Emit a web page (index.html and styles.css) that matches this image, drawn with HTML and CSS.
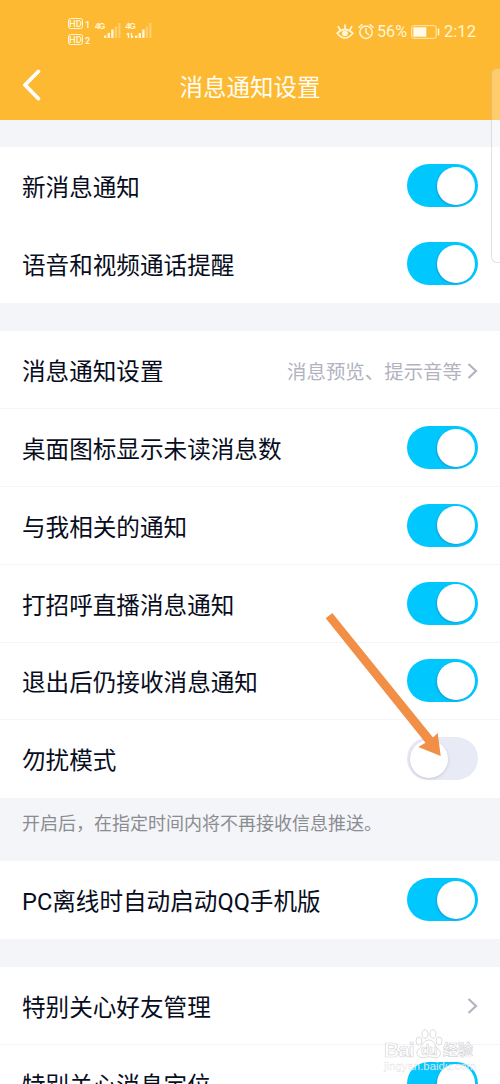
FILE: index.html
```html
<!DOCTYPE html>
<html lang="zh-CN">
<head>
<meta charset="utf-8">
<title>消息通知设置</title>
<link rel="stylesheet" href="styles.css">
</head>
<body>
<div class="screen">
  <header class="header">
    <div class="status">
      <div class="status-left">
        <div class="hd-stack">
          <div class="hd"><span class="hd-box">HD</span><span class="hd-num">1</span></div>
          <div class="hd"><span class="hd-box">HD</span><span class="hd-num">2</span></div>
        </div>
        <div class="signal">
          <span class="net">4G</span>
          <svg class="bars" width="26" height="17" viewBox="0 0 26 17"><path d="M9 13.500h2.400v2.500H9zM12.600 11h2.400v5h-2.400zM16.200 7.500h2.400v8.500h-2.400z" fill="#fff6d6"/><path d="M19.800 4.500h2.200v11.500h-2.200zM23.200 1h2.200v15h-2.200z" fill="#fff" opacity=".3"/></svg>
        </div>
        <div class="signal">
          <span class="net">4G</span>
          <svg class="bars" width="26" height="17" viewBox="0 0 26 17"><path d="M2.500 11v5M.8 12.700l1.700-1.700M5.500 11v5M5.500 16l1.700-1.700" stroke="#fff6d6" stroke-width="1.400" fill="none"/><path d="M9 13.500h2.400v2.500H9zM12.600 11h2.400v5h-2.400zM16.200 7.500h2.400v8.500h-2.400z" fill="#fff6d6"/><path d="M19.800 4.500h2.200v11.500h-2.200zM23.200 1h2.200v15h-2.200z" fill="#fff" opacity=".3"/></svg>
        </div>
      </div>
      <div class="status-right">
        <svg width="18" height="16" viewBox="0 0 18 16" fill="none" stroke="#fff6d6" stroke-width="1.700" stroke-linecap="round"><path d="M1.200 9.200Q9 1.500 16.800 9.200Q9 18.800 1.200 9.200Z"/><circle cx="9" cy="9.300" r="2.900" fill="#fff6d6" stroke="none"/><path d="M9 4.500V1M4 5.500 2.200 2.600M14 5.500l1.800-2.900"/></svg>
        <svg class="alarm" width="16" height="17" viewBox="0 0 16 17" fill="none" stroke="#fff6d6" stroke-width="1.500" stroke-linecap="round"><circle cx="8" cy="9.200" r="6.200"/><path d="M8 5.500v4l2.500 2M1 4.200 4 1.500M12 1.500l3 2.700"/></svg>
        <span class="percent">56%</span>
        <svg class="battery" width="29" height="14" viewBox="0 0 29 14"><rect x=".7" y=".7" width="24.500" height="12.600" rx="2" fill="none" stroke="#fff6d6" stroke-width="1" opacity=".8"/><rect x="2.300" y="2.300" width="13" height="9.400" fill="#fffbe8"/><rect x="26.700" y="3.500" width="1.600" height="7" fill="#fff6d6"/></svg>
        <span class="clock">2:12</span>
      </div>
    </div>
    <div class="navbar">
      <svg class="back" width="20" height="34" viewBox="0 0 20 34" fill="none" stroke="#fff" stroke-width="3.900" stroke-linecap="round" stroke-linejoin="round"><path d="M17.300 3.500 4 17 17.300 30.500"/></svg>
      <h1 class="title">消息通知设置</h1>
    </div>
  </header>

  <section class="group plain">
    <div class="row"><span class="label">新消息通知</span><span class="toggle"></span></div>
    <div class="row"><span class="label">语音和视频通话提醒</span><span class="toggle"></span></div>
  </section>

  <section class="group">
    <div class="row"><span class="label">消息通知设置</span><span class="value">消息预览、提示音等</span><svg class="chevron" width="11" height="18" viewBox="0 0 11 18"><path d="M1.500 2 9 9l-7.500 7"/></svg></div>
    <div class="row"><span class="label">桌面图标显示未读消息数</span><span class="toggle"></span></div>
    <div class="row"><span class="label">与我相关的通知</span><span class="toggle"></span></div>
    <div class="row"><span class="label">打招呼直播消息通知</span><span class="toggle"></span></div>
    <div class="row"><span class="label">退出后仍接收消息通知</span><span class="toggle"></span></div>
    <div class="row"><span class="label">勿扰模式</span><span class="toggle off"></span></div>
  </section>
  <p class="hint">开启后，在指定时间内将不再接收信息推送。</p>

  <section class="group">
    <div class="row"><span class="label">PC离线时自动启动QQ手机版</span><span class="toggle"></span></div>
  </section>

  <section class="group">
    <div class="row"><span class="label">特别关心好友管理</span><svg class="chevron" width="11" height="18" viewBox="0 0 11 18"><path d="M1.500 2 9 9l-7.500 7"/></svg></div>
    <div class="row"><span class="label">特别关心消息定位</span><span class="toggle"></span></div>
  </section>

  <div class="edge-panel"></div>
  <svg class="arrow" width="122" height="150" viewBox="0 0 122 150"><polygon points="4.700,8.300 11.300,3 112,127.500 116.700,123 119.700,146 97.300,137 104.500,132.800"/></svg>
  <div class="watermark">
    <div class="wm-brand"><span class="wm-bai">Bai</span>
      <span class="wm-paw"><svg width="28" height="30" viewBox="0 0 28 30"><ellipse cx="4" cy="12" rx="3" ry="4"/><ellipse cx="10" cy="5" rx="3" ry="4.200"/><ellipse cx="18" cy="5" rx="3" ry="4.200"/><ellipse cx="24" cy="12" rx="3" ry="4"/><path d="M14 11C8 11 8 17 4 20S2 29 8 28.500Q14 27 20 28.500C26 29 27 23 23 20S20 11 14 11Z"/></svg><span class="wm-du">du</span></span>
      <span class="wm-cn">经验</span></div>
    <div class="wm-url">jingyan.baidu.com</div>
  </div>
</div>
</body>
</html>
```
FILE: styles.css
```css
* { box-sizing: border-box; }
body {
  margin: 0;
  background: #f3f5f9;
  font-family: Roboto, "Noto Sans CJK SC", sans-serif;
  color: #080d1d;
}
.screen { position: relative; height: 1084px; overflow: hidden; }

.header {
  height: 119.600px;
  margin-bottom: 27.600px;
  background: #feb932;
  color: #fff6d6;
}
.status {
  display: flex;
  justify-content: space-between;
  align-items: flex-start;
  height: 54px;
  padding: 16px 24px 0 68px;
}
.status-left { display: flex; }
.hd-stack { display: flex; flex-direction: column; gap: 5px; margin-top: 1px; width: 27px; }
.hd { display: flex; align-items: flex-end; gap: 2px; height: 11.500px; }
.hd-box {
  width: 15px;
  height: 11px;
  border: 1px solid #fff6d6;
  border-radius: 2.500px;
  font-size: 9.500px;
  line-height: 9.500px;
  text-align: center;
  font-weight: 500;
}
.hd-num { font-size: 9px; line-height: 8px; font-weight: 700; }
.signal { position: relative; width: 30.500px; height: 23px; padding-top: 5.500px; }
.net { display: block; font-family: "Liberation Sans", sans-serif; font-size: 8.500px; letter-spacing: -1px; line-height: 9px; font-weight: 700; }
.bars { position: absolute; left: 0; top: 6px; }
.status-right { display: flex; align-items: center; height: 31px; }
.alarm { margin-left: 4px; }
.percent { margin-left: 3px; font-size: 16.200px; }
.battery { margin-left: 4px; }
.clock { margin-left: 4px; font-size: 16.600px; }

.navbar { display: flex; justify-content: center; position: relative; height: 65px; }
.back { position: absolute; left: 21px; top: 13.500px; }
.title { margin: 17px 0 0; font-size: 23.500px; line-height: 34px; font-weight: 400; color: #fffdf2; }

.group { margin-bottom: 28px; background: #fff; }
.row {
  display: flex;
  align-items: center;
  height: 77.800px;
  padding: 0 22px;
  border-bottom: 1.500px solid #f4f5f8;
}
.plain .row { height: 78.100px; }
.row:last-child, .plain .row { border-bottom-color: transparent; }
.label { flex: 1; padding-top: 5px; font-size: 23.600px; line-height: 34px; white-space: nowrap; }
.value { padding-top: 6px; margin-right: 5px; font-size: 19.450px; line-height: 28px; color: #b2b3bf; }
.chevron { position: relative; top: 1px; fill: none; stroke: #b2b3c0; stroke-width: 2.200; }

.toggle { width: 71px; height: 43px; padding: 2.500px 3px; border-radius: 22px; background: #00c8ff; }
.toggle::before {
  content: "";
  display: block;
  width: 38px;
  height: 38px;
  margin-left: auto;
  border-radius: 50%;
  background: #fff;
  box-shadow: -1px 1px 2px rgba(60, 90, 140, .35);
}
.toggle.off { background: #e8eaf6; }
.toggle.off::before { margin-left: 0; box-shadow: 0 1px 3px rgba(90, 90, 130, .25); }

.hint {
  height: 63px;
  margin: -28px 0 0;
  padding: 12px 22px 0;
  font-size: 18px;
  line-height: 28px;
  color: #8b8c90;
}

.edge-panel {
  position: absolute;
  left: 491px;
  top: 68px;
  width: 20px;
  height: 195px;
  border: 1px solid rgba(140, 140, 140, .25);
  border-radius: 6px;
  background: rgba(255, 255, 255, .28);
}
.arrow { position: absolute; left: 321px; top: 610px; fill: #f28f47; }

.watermark {
  position: absolute;
  left: 384px;
  top: 1029px;
  width: 110px;
  color: rgba(255, 255, 255, .8);
  font-family: "Liberation Sans", "Noto Sans CJK SC", sans-serif;
  -webkit-text-stroke: .7px rgba(190, 190, 195, .65);
}
.wm-brand { display: flex; height: 32px; }
.wm-bai { width: 31px; padding-top: 10px; font-size: 21px; line-height: 22px; font-weight: 700; letter-spacing: -1px; }
.wm-paw { position: relative; width: 28px; }
.wm-paw svg { fill: rgba(255, 255, 255, .8); stroke: #d8d8da; stroke-width: .9; }
.wm-du { position: absolute; left: 6px; top: 12.500px; font-size: 14px; line-height: 16px; font-weight: 700; letter-spacing: -.5px; }
.wm-cn { padding-top: 10px; font-size: 15px; line-height: 22px; font-weight: 700; }
.wm-url { margin-top: -1px; font-size: 11.200px; line-height: 13px; letter-spacing: .1px; -webkit-text-stroke: .3px rgba(195, 195, 200, .6); }
```
